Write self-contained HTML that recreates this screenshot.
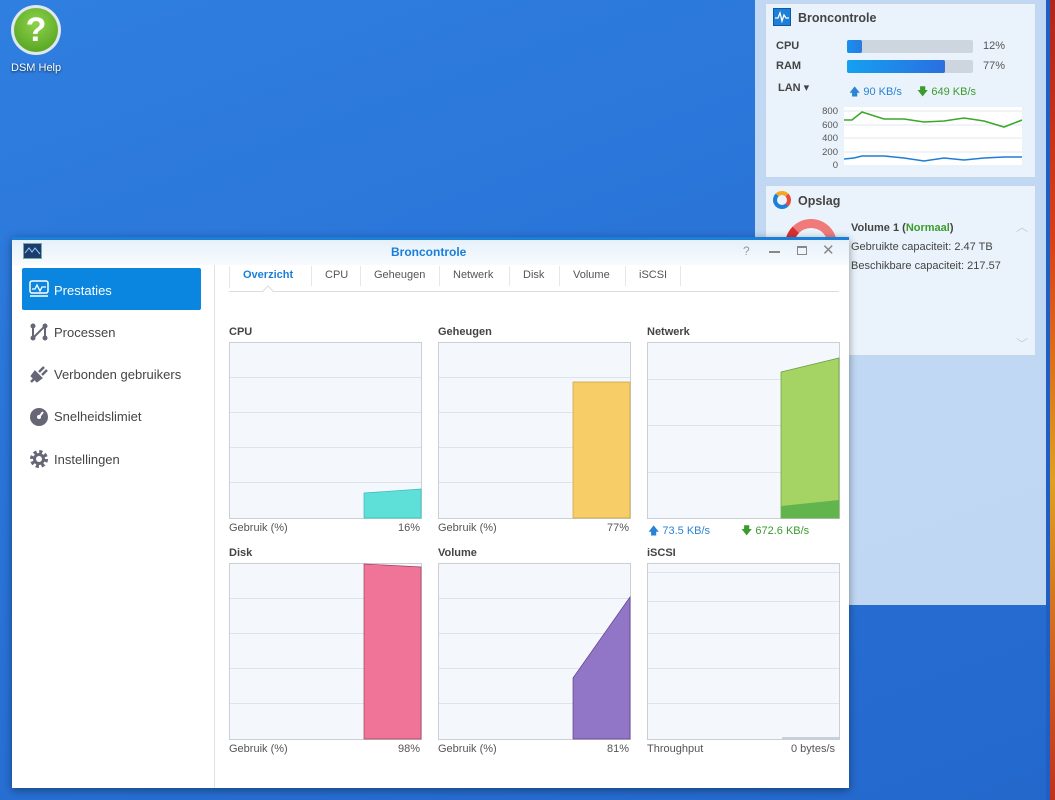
<!DOCTYPE html>
<html><head><meta charset="utf-8"><style>
*{margin:0;padding:0;box-sizing:border-box}
body{width:1055px;height:800px;overflow:hidden;position:relative;font-family:"Liberation Sans","DejaVu Sans",sans-serif;background:linear-gradient(160deg,#2f7fe0 0%,#2a74d8 40%,#2468cc 100%);}
.abs{position:absolute}
.t{font-size:12px;color:#333}
.b{font-weight:bold}
</style></head><body>
<!-- red strip -->
<div class="abs" style="left:1046px;top:0;width:4px;height:800px;background:#1f5fc4"></div>
<div class="abs" style="left:1050px;top:0;width:5px;height:800px;background:linear-gradient(#b0241a,#d8401a 30%,#e0a020 60%,#c03020)"></div>
<!-- DSM help -->
<div class="abs" style="left:11px;top:5px;width:50px;height:50px;border-radius:50%;background:#dfe8ef;"></div>
<div class="abs" style="left:14px;top:8px;width:44px;height:44px;border-radius:50%;background:radial-gradient(circle at 50% 35%,#8ed24a,#4c9c1a);color:#fff;font-size:34px;font-weight:bold;text-align:center;line-height:44px">?</div>
<div class="abs" style="left:11px;top:62px;font-size:11px;color:#fff;text-shadow:0 1px 2px #024">DSM Help</div>
<!-- widget panel -->
<div class="abs" style="left:755px;top:0;width:291px;height:605px;background:rgba(205,225,245,0.92)"></div>
<div class="abs" style="left:765px;top:3px;width:271px;height:175px;background:#eaf3fb;border:1px solid #c5d6e6"></div>
<div class="abs" style="left:773px;top:8px;width:18px;height:18px;background:#1e7fd6;border:1px solid #0b5aa8"><svg width="16" height="16"><path d="M1 9h3l2-5 2 8 2-6 2 3h3" stroke="#fff" fill="none" stroke-width="1.3"/></svg></div>
<div class="abs t b" style="left:798px;top:11px;font-size:12.5px;color:#444">Broncontrole</div>
<div class="abs t b" style="left:776px;top:40px;font-size:11px;color:#444">CPU</div>
<div class="abs t b" style="left:776px;top:60px;font-size:11px;color:#444">RAM</div>
<div class="abs t b" style="left:778px;top:81px;font-size:11px;color:#444">LAN ▾</div>
<div class="abs" style="left:847px;top:40px;width:126px;height:13px;background:#cdd6df;border-radius:2px"><div style="width:15px;height:13px;background:linear-gradient(90deg,#1593ee,#2a7ae0);border-radius:2px"></div></div>
<div class="abs" style="left:847px;top:60px;width:126px;height:13px;background:#cdd6df;border-radius:2px"><div style="width:98px;height:13px;background:linear-gradient(90deg,#15a0f0,#2a6ee0);border-radius:2px"></div></div>
<div class="abs t" style="left:983px;top:40px;font-size:11px;color:#555">12%</div>
<div class="abs t" style="left:983px;top:60px;font-size:11px;color:#555">77%</div>
<div class="abs" style="left:849px;top:83px;font-size:11px;color:#2a83d4">🡅 90 KB/s</div>
<div class="abs" style="left:917px;top:83px;font-size:11px;color:#3a9c2c">🡇 649 KB/s</div>
<div class="abs" style="left:806px;top:105px;width:32px;font-size:9.5px;color:#555;text-align:right;line-height:13.6px">800<br>600<br>400<br>200<br>0</div>
<svg class="abs" style="left:844px;top:107px" width="178" height="58"><rect width="178" height="58" fill="#fff"/><g stroke="#e2e8ee"><line x1="0" y1="4" x2="178" y2="4"/><line x1="0" y1="18" x2="178" y2="18"/><line x1="0" y1="31" x2="178" y2="31"/><line x1="0" y1="45" x2="178" y2="45"/></g><polyline points="0,13 8,13 18,5 40,12 60,12 80,15 100,14 120,11 140,14 160,20 178,13" fill="none" stroke="#3aa82a" stroke-width="1.6"/><polyline points="0,52 10,51 18,49 40,49 60,51 80,54 100,51 120,53 140,51 160,50 178,50" fill="none" stroke="#1e7fd6" stroke-width="1.6"/></svg>
<div class="abs" style="left:765px;top:185px;width:271px;height:171px;background:#eaf3fb;border:1px solid #c5d6e6"></div>
<div class="abs" style="left:773px;top:191px;width:18px;height:18px;border-radius:50%;border:4px solid #1e7fd6;border-top-color:#f5a623;border-right-color:#e84b3a"></div>
<div class="abs t b" style="left:798px;top:194px;font-size:12.5px;color:#444">Opslag</div>
<div class="abs" style="left:785px;top:219px;width:52px;height:52px;border-radius:50%;border:9px solid #f07a7a;border-left-color:#d93030"></div>
<div class="abs t b" style="left:851px;top:222px;font-size:11px;color:#444">Volume 1 (<span style="color:#3a9c2c">Normaal</span>)</div>
<div class="abs t" style="left:851px;top:241px;font-size:11px;color:#444">Gebruikte capaciteit: 2.47 TB</div>
<div class="abs t" style="left:851px;top:260px;font-size:11px;color:#444">Beschikbare capaciteit: 217.57</div>
<div class="abs" style="left:1016px;top:218px;color:#c5cdd6;font-size:12px">︿</div>
<div class="abs" style="left:1016px;top:335px;color:#c5cdd6;font-size:12px">﹀</div>
<!-- window -->
<div class="abs" style="left:12px;top:237px;width:837px;height:551px;background:#fff;border-top:3px solid #1a7fd8;box-shadow:0 2px 8px rgba(0,0,0,.4)"></div>
<div class="abs" style="left:12px;top:240px;width:837px;height:25px;background:linear-gradient(#e6f0fa,#f8fbfe)"></div>
<div class="abs" style="left:23px;top:243px;width:19px;height:16px;background:#1c3d6c;border:1px solid #7aa"><svg width="17" height="14"><path d="M1 9l4-5 3 4 3-4 5 6" stroke="#9cf" fill="none"/></svg></div>
<div class="abs b" style="left:391px;top:245px;font-size:12px;color:#1a7fd8">Broncontrole</div>
<div class="abs" style="left:743px;top:244px;font-size:12px;color:#999">?</div>
<div class="abs" style="left:769px;top:251px;width:11px;height:1.5px;background:#888"></div>
<div class="abs" style="left:797px;top:246px;width:10px;height:9px;border:1px solid #888;border-top-width:2.5px"></div>
<div class="abs" style="left:822px;top:241px;font-size:15px;color:#888">✕</div>
<!-- sidebar -->
<div class="abs" style="left:214px;top:265px;width:1px;height:523px;background:#dde3e8"></div>
<div class="abs" style="left:22px;top:268px;width:179px;height:42px;background:#0a86e0;border-radius:2px"></div>
<svg class="abs" style="left:29px;top:280px" width="20" height="18"><rect x="1" y="1" width="18" height="12" rx="2" fill="none" stroke="#fff" stroke-width="1.5"/><path d="M3 9h3l2-4 3 6 2-4h4" stroke="#fff" fill="none" stroke-width="1.3"/><line x1="1" y1="16" x2="19" y2="16" stroke="#fff" stroke-width="1.5"/></svg>
<div class="abs" style="left:54px;top:283px;font-size:13px;color:#fff">Prestaties</div>
<svg class="abs" style="left:29px;top:322px" width="20" height="20"><circle cx="4" cy="4" r="2.5" fill="#667"/><circle cx="4" cy="16" r="2.5" fill="#667"/><circle cx="16" cy="4" r="2.5" fill="#667"/><circle cx="16" cy="16" r="2.5" fill="#667"/><path d="M4 4v12L16 4v12" stroke="#667" fill="none" stroke-width="2"/></svg>
<div class="abs" style="left:54px;top:325px;font-size:13px;color:#444">Processen</div>
<svg class="abs" style="left:29px;top:364px" width="20" height="20"><path d="M2 18l4-4M6 8l6 6-4 3-5-5zM10 8l5-5M13 11l5-5" stroke="#667" fill="#667" stroke-width="2.5"/></svg>
<div class="abs" style="left:54px;top:367px;font-size:13px;color:#444">Verbonden gebruikers</div>
<svg class="abs" style="left:29px;top:407px" width="20" height="20"><circle cx="10" cy="10" r="9" fill="#667"/><path d="M10 10l4-5" stroke="#fff" stroke-width="2"/><circle cx="10" cy="10" r="2" fill="#fff"/></svg>
<div class="abs" style="left:54px;top:409px;font-size:13px;color:#444">Snelheidslimiet</div>
<svg class="abs" style="left:29px;top:449px" width="20" height="20"><circle cx="10" cy="10" r="7" fill="none" stroke="#667" stroke-width="4" stroke-dasharray="3 2.5"/><circle cx="10" cy="10" r="6" fill="#667"/><circle cx="10" cy="10" r="3" fill="#fff"/></svg>
<div class="abs" style="left:54px;top:452px;font-size:13px;color:#444">Instellingen</div>
<!-- tabs -->
<div class="abs" style="left:229px;top:291px;width:610px;height:1px;background:#d6dde3"></div>
<div class="abs b" style="left:243px;top:269px;font-size:11px;color:#1a7fd8">Overzicht</div>
<div class="abs" style="left:264px;top:287px;width:8px;height:8px;background:#fff;border-left:1px solid #d6dde3;border-top:1px solid #d6dde3;transform:rotate(45deg)"></div>
<div class="abs t" style="left:325px;top:269px;font-size:11px;color:#555">CPU</div>
<div class="abs t" style="left:374px;top:269px;font-size:11px;color:#555">Geheugen</div>
<div class="abs t" style="left:453px;top:269px;font-size:11px;color:#555">Netwerk</div>
<div class="abs t" style="left:523px;top:269px;font-size:11px;color:#555">Disk</div>
<div class="abs t" style="left:573px;top:269px;font-size:11px;color:#555">Volume</div>
<div class="abs t" style="left:639px;top:269px;font-size:11px;color:#555">iSCSI</div>
<div class="abs" style="left:229px;top:266px;width:1px;height:22px;background:#e4e8ec"></div>
<div class="abs" style="left:311px;top:266px;width:1px;height:20px;background:#e4e8ec"></div>
<div class="abs" style="left:360px;top:266px;width:1px;height:20px;background:#e4e8ec"></div>
<div class="abs" style="left:439px;top:266px;width:1px;height:20px;background:#e4e8ec"></div>
<div class="abs" style="left:509px;top:266px;width:1px;height:20px;background:#e4e8ec"></div>
<div class="abs" style="left:559px;top:266px;width:1px;height:20px;background:#e4e8ec"></div>
<div class="abs" style="left:625px;top:266px;width:1px;height:20px;background:#e4e8ec"></div>
<div class="abs" style="left:680px;top:266px;width:1px;height:20px;background:#e4e8ec"></div>
<!-- charts -->
<div class="abs b" style="left:229px;top:326px;font-size:11px;color:#444">CPU</div>
<div class="abs b" style="left:438px;top:326px;font-size:11px;color:#444">Geheugen</div>
<div class="abs b" style="left:647px;top:326px;font-size:11px;color:#444">Netwerk</div>
<div class="abs b" style="left:229px;top:547px;font-size:11px;color:#444">Disk</div>
<div class="abs b" style="left:438px;top:547px;font-size:11px;color:#444">Volume</div>
<div class="abs b" style="left:647px;top:547px;font-size:11px;color:#444">iSCSI</div>
<svg class="abs" style="left:229px;top:342px" width="193" height="177"><rect x=".5" y=".5" width="192" height="176" fill="#f4f8fc" stroke="#c9cfd5"/><g stroke="#dde3ea"><line x1="1" y1="35.5" x2="192" y2="35.5"/><line x1="1" y1="70.5" x2="192" y2="70.5"/><line x1="1" y1="105.5" x2="192" y2="105.5"/><line x1="1" y1="140.5" x2="192" y2="140.5"/></g><path d="M135 151L192 147V176H135Z" fill="#5ee0d8" stroke="#3bb" stroke-width=".7"/></svg>
<svg class="abs" style="left:438px;top:342px" width="193" height="177"><rect x=".5" y=".5" width="192" height="176" fill="#f4f8fc" stroke="#c9cfd5"/><g stroke="#dde3ea"><line x1="1" y1="35.5" x2="192" y2="35.5"/><line x1="1" y1="70.5" x2="192" y2="70.5"/><line x1="1" y1="105.5" x2="192" y2="105.5"/><line x1="1" y1="140.5" x2="192" y2="140.5"/></g><path d="M135 40L192 40V176H135Z" fill="#f7cd68" stroke="#c9a040" stroke-width=".7"/></svg>
<svg class="abs" style="left:647px;top:342px" width="193" height="177"><rect x=".5" y=".5" width="192" height="176" fill="#f4f8fc" stroke="#c9cfd5"/><g stroke="#dde3ea"><line x1="1" y1="37.5" x2="192" y2="37.5"/><line x1="1" y1="83.5" x2="192" y2="83.5"/><line x1="1" y1="130.5" x2="192" y2="130.5"/></g><path d="M134 30L192 16V176H134Z" fill="#a6d464" stroke="#6a9a40" stroke-width=".7"/><path d="M134 164L192 158V176H134Z" fill="#62b44c"/></svg>
<svg class="abs" style="left:229px;top:563px" width="193" height="177"><rect x=".5" y=".5" width="192" height="176" fill="#f4f8fc" stroke="#c9cfd5"/><g stroke="#dde3ea"><line x1="1" y1="35.5" x2="192" y2="35.5"/><line x1="1" y1="70.5" x2="192" y2="70.5"/><line x1="1" y1="105.5" x2="192" y2="105.5"/><line x1="1" y1="140.5" x2="192" y2="140.5"/></g><path d="M135 1L192 4V176H135Z" fill="#f07498" stroke="#a04060" stroke-width=".7"/></svg>
<svg class="abs" style="left:438px;top:563px" width="193" height="177"><rect x=".5" y=".5" width="192" height="176" fill="#f4f8fc" stroke="#c9cfd5"/><g stroke="#dde3ea"><line x1="1" y1="35.5" x2="192" y2="35.5"/><line x1="1" y1="70.5" x2="192" y2="70.5"/><line x1="1" y1="105.5" x2="192" y2="105.5"/><line x1="1" y1="140.5" x2="192" y2="140.5"/></g><path d="M135 115L192 34V176H135Z" fill="#9175c6" stroke="#604090" stroke-width=".7"/></svg>
<svg class="abs" style="left:647px;top:563px" width="193" height="177"><rect x=".5" y=".5" width="192" height="176" fill="#f4f8fc" stroke="#c9cfd5"/><g stroke="#dde3ea"><line x1="1" y1="9.5" x2="192" y2="9.5"/><line x1="1" y1="38.5" x2="192" y2="38.5"/><line x1="1" y1="70.5" x2="192" y2="70.5"/><line x1="1" y1="105.5" x2="192" y2="105.5"/><line x1="1" y1="140.5" x2="192" y2="140.5"/></g><line x1="135" y1="175" x2="192" y2="175" stroke="#9ab" /></svg>
<div class="abs t" style="left:229px;top:522px;font-size:11px;color:#555">Gebruik (%)</div>
<div class="abs t" style="left:398px;top:522px;font-size:11px;color:#555">16%</div>
<div class="abs t" style="left:438px;top:522px;font-size:11px;color:#555">Gebruik (%)</div>
<div class="abs t" style="left:607px;top:522px;font-size:11px;color:#555">77%</div>
<div class="abs" style="left:648px;top:522px;font-size:11px;color:#2a83d4">🡅 73.5 KB/s</div>
<div class="abs" style="left:741px;top:522px;font-size:11px;color:#3a9c2c">🡇 672.6 KB/s</div>
<div class="abs t" style="left:229px;top:743px;font-size:11px;color:#555">Gebruik (%)</div>
<div class="abs t" style="left:398px;top:743px;font-size:11px;color:#555">98%</div>
<div class="abs t" style="left:438px;top:743px;font-size:11px;color:#555">Gebruik (%)</div>
<div class="abs t" style="left:607px;top:743px;font-size:11px;color:#555">81%</div>
<div class="abs t" style="left:647px;top:743px;font-size:11px;color:#555">Throughput</div>
<div class="abs t" style="left:791px;top:743px;font-size:11px;color:#555">0 bytes/s</div>
</body></html>
